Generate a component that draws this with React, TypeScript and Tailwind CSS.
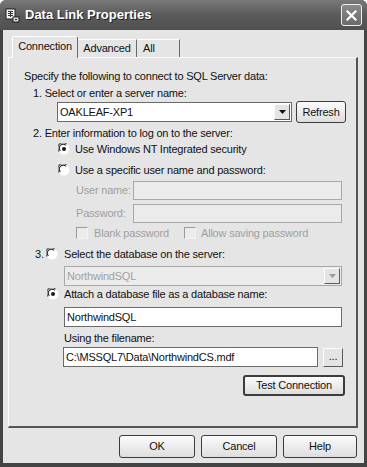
import React from 'react';

const font = { fontFamily: '"Liberation Sans", Arial, sans-serif' };

const Radio = ({ checked = false }: { checked?: boolean }) => (
  <svg width="12" height="12" viewBox="0 0 12 12" className="shrink-0">
    <circle cx="6" cy="6" r="5.5" fill="#ffffff" />
    <path d="M 1.2 8.5 A 5 5 0 0 1 8.5 1.2" stroke="#6a6a6a" strokeWidth="1.3" fill="none" />
    <path d="M 2.4 7.8 A 3.8 3.8 0 0 1 7.8 2.4" stroke="#2a2a2a" strokeWidth="1.1" fill="none" />
    {checked && <circle cx="6" cy="6" r="2" fill="#1a1a1a" />}
  </svg>
);

const Checkbox = () => (
  <div className="w-[12px] h-[12px] shrink-0 border-t border-l border-[#9a9a9a] border-r border-b border-r-[#f4f4f4] border-b-[#f4f4f4] bg-[#ececec]" />
);

const ArrowBox = ({ disabled = false }: { disabled?: boolean }) => (
  <div className="w-[16px] h-[16px] flex items-center justify-center border border-t-[#fafafa] border-l-[#fafafa] border-r-[#5a5a5a] border-b-[#5a5a5a] bg-[#e4e4e4]">
    <svg width="7" height="4" viewBox="0 0 7 4">
      <path d="M0 0 H7 L3.5 4 Z" fill={disabled ? '#9a9a9a' : '#111'} />
    </svg>
  </div>
);

const Button = ({ label, className = '' }: { label: string; className?: string }) => (
  <div
    className={
      'flex items-center justify-center rounded-[3px] border border-[#3c3c3c] bg-gradient-to-b from-[#fbfbfb] to-[#dedede] text-[11px] text-[#111] ' +
      className
    }
  >
    {label}
  </div>
);

export default function App() {
  return (
    <div
      className="w-[367px] h-[467px] flex flex-col bg-[#444] rounded-t-[6px] overflow-hidden"
      style={font}
    >
      {/* Title bar */}
      <div className="h-[30px] flex items-center pl-[5px] pr-[5px] bg-gradient-to-b from-[#7a7a7a] via-[#5a5a5a] to-[#505050]">
        <svg width="15" height="15" viewBox="0 0 15 15" className="shrink-0">
          <rect x="1" y="1" width="9" height="10" fill="#f2f2f2" stroke="#222" strokeWidth="1" />
          <path d="M3 3.5 H8 M3 5.5 H8 M3 7.5 H8 M5.5 3 V9" stroke="#333" strokeWidth="1" />
          <rect x="8" y="9" width="6" height="5" fill="#d8d8d8" stroke="#222" strokeWidth="1" />
          <path d="M10 11.5 H12" stroke="#222" strokeWidth="1" />
        </svg>
        <span
          className="ml-[5px] text-[13px] font-bold text-white"
          style={{ textShadow: '1px 1px 0 #222' }}
        >
          Data Link Properties
        </span>
        <div className="ml-auto w-[21px] h-[22px] rounded-[3px] border border-[#f0f0f0] bg-gradient-to-b from-[#8a8a8a] to-[#6a6a6a] flex items-center justify-center">
          <svg width="11" height="11" viewBox="0 0 11 11">
            <path d="M1.5 1.5 L9.5 9.5 M9.5 1.5 L1.5 9.5" stroke="#fff" strokeWidth="2.2" strokeLinecap="square" />
          </svg>
        </div>
      </div>

      {/* Client area */}
      <div className="flex-1 mx-[3px] mb-[4px] bg-[#e5e5e5] flex flex-col text-[11px] text-[#111] tracking-[-0.2px]">
        {/* Tabs */}
        <div className="flex items-end pl-[9px] pt-[5px] h-[27px] relative z-10">
          <div className="h-[22px] w-[66px] -mb-[1px] bg-[#e5e5e5] border-t border-l border-[#fff] border-r border-r-[#6a6a6a] rounded-t-[2px] flex items-center justify-center pb-[2px]">
            Connection
          </div>
          <div className="h-[18px] w-[59px] border-t border-[#fff] border-r border-r-[#6a6a6a] flex items-center justify-center">
            Advanced
          </div>
          <div className="h-[18px] w-[43px] border-t border-[#fff] border-r border-r-[#6a6a6a] flex items-center pl-[6px]">
            All
          </div>
        </div>

        {/* Panel */}
        <div className="ml-[5px] mr-[6px] h-[371px] border-t border-l border-[#fbfbfb] border-r-2 border-b-2 border-r-[#555] border-b-[#555] flex flex-col">
          <div className="mt-[11px] ml-[15px] h-[14px] leading-[14px]">
            Specify the following to connect to SQL Server data:
          </div>
          <div className="mt-[3px] ml-[24px] h-[14px] leading-[14px]">1. Select or enter a server name:</div>
          <div className="mt-[1px] ml-[48px] h-[22px] flex items-center">
            <div className="w-[235px] h-[20px] bg-white border border-[#6a6a6a] flex items-center pl-[2px] pr-[1px]">
              <span className="flex-1">OAKLEAF-XP1</span>
              <ArrowBox />
            </div>
            <Button label="Refresh" className="ml-[4px] w-[50px] h-[22px]" />
          </div>
          <div className="mt-[3px] ml-[24px] h-[14px] leading-[14px]">
            2. Enter information to log on to the server:
          </div>
          <div className="mt-[2px] ml-[49px] h-[14px] flex items-center gap-[5px]">
            <Radio checked />
            <span>Use Windows NT Integrated security</span>
          </div>
          <div className="mt-[7px] ml-[49px] h-[14px] flex items-center gap-[5px]">
            <Radio />
            <span>Use a specific user name and password:</span>
          </div>
          <div className="mt-[4px] ml-[67px] h-[19px] flex items-center text-[#a0a0a0]">
            <span className="w-[57px]">User name:</span>
            <div className="w-[209px] h-[19px] bg-[#ebebeb] border border-[#a8a8a8]" />
          </div>
          <div className="mt-[4px] ml-[67px] h-[19px] flex items-center text-[#a0a0a0]">
            <span className="w-[57px]">Password:</span>
            <div className="w-[209px] h-[19px] bg-[#ebebeb] border border-[#a8a8a8]" />
          </div>
          <div className="mt-[3px] ml-[67px] h-[14px] flex items-center text-[#a0a0a0]">
            <Checkbox />
            <span className="ml-[6px] w-[90px]">Blank password</span>
            <Checkbox />
            <span className="ml-[5px]">Allow saving password</span>
          </div>
          <div className="mt-[7px] ml-[26px] h-[14px] flex items-center">
            <span className="w-[11px]">3.</span>
            <Radio />
            <span className="ml-[6px]">Select the database on the server:</span>
          </div>
          <div className="mt-[5px] ml-[55px] w-[278px] h-[20px] bg-[#ececec] border border-[#a8a8a8] flex items-center pl-[2px] pr-[1px] text-[#a0a0a0]">
            <span className="flex-1">NorthwindSQL</span>
            <ArrowBox disabled />
          </div>
          <div className="mt-[1px] ml-[38px] h-[14px] flex items-center">
            <Radio checked />
            <span className="ml-[5px]">Attach a database file as a database name:</span>
          </div>
          <div className="mt-[6px] ml-[55px] w-[278px] h-[20px] bg-white border border-[#6a6a6a] flex items-center pl-[2px]">
            NorthwindSQL
          </div>
          <div className="mt-[4px] ml-[55px] h-[14px] leading-[14px]">Using the filename:</div>
          <div className="mt-[2px] ml-[54px] h-[20px] flex items-center">
            <div className="w-[255px] h-[20px] bg-white border border-[#6a6a6a] flex items-center pl-[2px]">
              C:\MSSQL7\Data\NorthwindCS.mdf
            </div>
            <div className="ml-[5px] w-[20px] h-[19px] border border-t-[#fafafa] border-l-[#fafafa] border-r-[#5a5a5a] border-b-[#5a5a5a] bg-[#e4e4e4] flex items-center justify-center leading-none pb-[2px]">
              ...
            </div>
          </div>
          <div className="mt-[8px] self-end mr-[11px]">
            <Button label="Test Connection" className="w-[102px] h-[21px] border-2 border-[#1e1e1e]" />
          </div>
        </div>

        {/* Dialog buttons */}
        <div className="mt-[7px] flex justify-end pr-[7px] gap-[6px]">
          <Button label="OK" className="w-[76px] h-[23px]" />
          <Button label="Cancel" className="w-[76px] h-[23px]" />
          <Button label="Help" className="w-[74px] h-[23px]" />
        </div>
      </div>
    </div>
  );
}
